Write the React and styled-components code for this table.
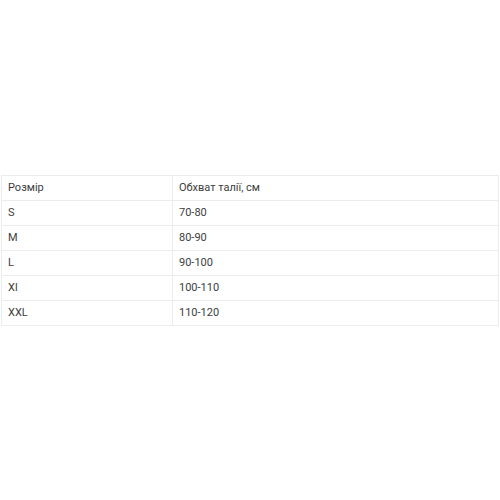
import React from "react";
import styled, { createGlobalStyle } from "styled-components";

const GlobalStyle = createGlobalStyle`
  body {
    margin: 0;
    background: #ffffff;
    font-family: Roboto, "Liberation Sans", sans-serif;
  }
`;

const Page = styled.main`
  padding: 175px 1px 0 1px;
`;

const Table = styled.table`
  width: 498px;
  border-collapse: collapse;
  font-size: 11px;
  color: #3d3d3d;
`;

const Cell = styled.td`
  border: 1px solid #ececec;
  height: 25px;
  padding: 0 6px;
  box-sizing: border-box;
  line-height: 14px;
  vertical-align: middle;
  width: ${props => (props.first ? "171px" : "auto")};
`;

const rows = [
  ["Розмір", "Обхват талії, см"],
  ["S", "70-80"],
  ["M", "80-90"],
  ["L", "90-100"],
  ["Xl", "100-110"],
  ["XXL", "110-120"],
];

export default function App() {
  return (
    <Page>
      <GlobalStyle />
      <Table>
        <tbody>
          {rows.map(([size, waist]) => (
            <tr key={size}>
              <Cell first>{size}</Cell>
              <Cell>{waist}</Cell>
            </tr>
          ))}
        </tbody>
      </Table>
    </Page>
  );
}
